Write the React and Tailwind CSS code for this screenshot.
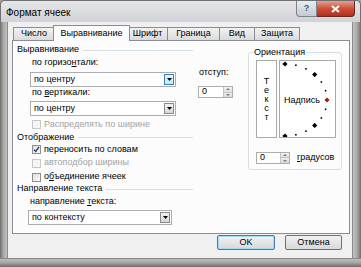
const F = "font-['Liberation_Sans',Arial,sans-serif]";

function DownArrow() {
  return (
    <svg width="5" height="3" viewBox="0 0 5 3">
      <path d="M0 0h5L2.5 3z" fill="#000" />
    </svg>
  );
}

function Dropdown({ value, wide, focused }) {
  return (
    <div className={`flex h-[15px] ${wide ? 'w-[146px]' : 'w-[144px]'} bg-white border border-[#abadb3]`}>
      <div className="flex-1 flex items-center pl-[3px] text-[9px] text-black">{value}</div>
      <div
        className={`w-[10px] m-[1px] flex items-center justify-center border ${
          focused
            ? 'bg-linear-to-b from-[#eaf6fd] to-[#bee6fd] border-[#3c7fb1]'
            : 'bg-linear-to-b from-[#f2f2f2] to-[#d6d6d6] border-[#8a8a8a]'
        }`}
      >
        <DownArrow />
      </div>
    </div>
  );
}

function Spinner({ width }) {
  return (
    <div className={`flex h-[12px] ${width} bg-white border border-[#abadb3]`}>
      <div className="flex-1 flex items-center pl-[3px] text-[9px] text-black">0</div>
      <div className="w-[9px] flex flex-col border-l border-[#c3c3c3]">
        <div className="flex-1 flex items-center justify-center bg-linear-to-b from-[#f4f4f4] to-[#dfdfdf] border-b border-[#c3c3c3]">
          <svg width="4" height="2" viewBox="0 0 4 2">
            <path d="M0 2h4L2 0z" fill="#7a7a7a" />
          </svg>
        </div>
        <div className="flex-1 flex items-center justify-center bg-linear-to-b from-[#eeeeee] to-[#d9d9d9]">
          <svg width="4" height="2" viewBox="0 0 4 2">
            <path d="M0 0h4L2 2z" fill="#7a7a7a" />
          </svg>
        </div>
      </div>
    </div>
  );
}

function Check({ children, checked, disabled, h }) {
  return (
    <div className={`flex items-center ${h} ml-[19px]`}>
      <div
        className={`w-[9px] h-[9px] border flex items-center justify-center ${
          disabled ? 'border-[#c9c9c9] bg-[#f5f5f5]' : 'border-[#8e8f8f] bg-linear-to-br from-[#dedede] to-[#fafafa]'
        }`}
      >
        {checked && (
          <svg width="7" height="7" viewBox="0 0 7 7">
            <path d="M1 3.6l1.7 1.8L6 1" stroke="#1f3f7a" strokeWidth="1.3" fill="none" />
          </svg>
        )}
      </div>
      <span className={`ml-[3px] text-[9px] ${disabled ? 'text-[#a3a3a3]' : 'text-black'}`}>{children}</span>
    </div>
  );
}

function Header({ children, h }) {
  return (
    <div className={`flex items-center ml-[4px] w-[176px] ${h}`}>
      <span className="text-[9px] text-black whitespace-nowrap">{children}</span>
      <div className="flex-1 h-px bg-[#d5dfe5] ml-[4px]" />
    </div>
  );
}

function Tab({ children, w, selected }) {
  if (selected) {
    return (
      <div className={`relative z-10 ${w} h-[16px] -mb-px -mx-[2px] bg-[#fcfcfc] border border-b-0 border-[#898c95] flex items-center justify-center text-[9px] text-black`}>
        {children}
      </div>
    );
  }
  return (
    <div className={`${w} h-[13px] -ml-px first:ml-0 bg-linear-to-b from-[#f3f3f3] to-[#dadada] border border-b-0 border-[#898c95] flex items-center justify-center text-[9px] text-black`}>
      {children}
    </div>
  );
}

function OrientationDial() {
  const cx = 5;
  const cy = 39;
  const rx = 42;
  const ry = 36;
  const angles = [90, 75, 60, 45, 30, 15, 0, -15, -30, -45, -60, -75, -90];
  return (
    <svg className="absolute inset-0" width="55" height="76" viewBox="0 0 55 76">
      {angles.map((a) => {
        const r = (a * Math.PI) / 180;
        const x = cx + rx * Math.cos(r);
        const y = cy - ry * Math.sin(r);
        const big = a % 45 === 0;
        if (big) {
          const s = 2.6;
          const fill = a === 0 ? '#9b1c22' : '#000';
          return (
            <path
              key={a}
              d={`M${x} ${y - s}L${x + s} ${y}L${x} ${y + s}L${x - s} ${y}z`}
              fill={fill}
            />
          );
        }
        return <rect key={a} x={x - 0.8} y={y - 0.8} width="1.6" height="1.6" fill="#000" />;
      })}
    </svg>
  );
}

export default function App() {
  return (
    <div className={`w-[361px] h-[267px] flex flex-col bg-[#9f9f9f] overflow-hidden ${F}`}>
      {/* Title bar */}
      <div className="h-[22px] flex items-start bg-linear-to-b from-[#e6e7e9] to-[#d0d2d5] border-t border-l border-r border-[#6f6f6f] rounded-t-[5px]">
        <span className="mt-[4px] ml-[5px] text-[10px] text-black">Формат ячеек</span>
        <div className="ml-auto mr-[5px] flex">
          <div className="w-[21px] h-[16px] rounded-bl-[4px] border border-t-0 border-[#7b8290] bg-linear-to-b from-[#e9edf2] to-[#c3cad3] flex items-center justify-center text-[9px] font-bold text-[#4a5a70]">
            ?
          </div>
          <div className="w-[38px] h-[16px] rounded-br-[4px] border border-t-0 border-l-0 border-[#6d2a22] bg-linear-to-b from-[#e5a092] via-[#c9503c] to-[#b42d18] flex items-center justify-center">
            <svg width="9" height="8" viewBox="0 0 9 8">
              <path d="M1 1l7 6M8 1L1 7" stroke="#fff" strokeWidth="2" />
            </svg>
          </div>
        </div>
      </div>

      <div className="flex flex-1">
        <div className="w-[8px] bg-linear-to-r from-[#6f6f6f] via-[#a9a9a9] to-[#c2c2c2] border-r border-[#8a8a8a]" />

        {/* Content area */}
        <div className="w-[344px] bg-[#f0f0f0] flex flex-col pt-[3px] pl-[4px]">
          {/* Tabs */}
          <div className="h-[15px] flex items-end pl-[1px]">
            <Tab w="w-[42px]">Число</Tab>
            <Tab w="w-[77px]" selected>
              Выравнивание
            </Tab>
            <Tab w="w-[41px]">Шрифт</Tab>
            <Tab w="w-[53px]">Граница</Tab>
            <Tab w="w-[36px]">Вид</Tab>
            <Tab w="w-[46px]">Защита</Tab>
          </div>

          {/* Panel */}
          <div className="w-[338px] h-[194px] border border-[#898c95] bg-[#fcfcfc] flex">
            {/* Left column */}
            <div className="w-[180px] flex flex-col pt-[3px]">
              <Header h="h-[12px]">Выравнивание</Header>
              <div className="h-[12px] mt-px ml-[19px] flex items-center text-[9px] text-black">
                <span>
                  по горизо<span className="underline">н</span>тали:
                </span>
              </div>
              <div className="mt-[3px] ml-[17px]">
                <Dropdown value="по центру" wide focused />
              </div>
              <div className="h-[12px] ml-[19px] flex items-center text-[9px] text-black">
                <span>
                  по <span className="underline">в</span>ертикали:
                </span>
              </div>
              <div className="mt-[2px] ml-[17px]">
                <Dropdown value="по центру" wide />
              </div>
              <Check h="h-[13px] mt-[2px]" disabled>
                Распределять по ширине
              </Check>
              <Header h="h-[11px] mt-px">Отображение</Header>
              <Check h="h-[13px]" checked>
                переносить по словам
              </Check>
              <Check h="h-[14px]" disabled>
                автоподбор ширины
              </Check>
              <Check h="h-[14px]">
                о<span className="underline">б</span>ъединение ячеек
              </Check>
              <Header h="h-[10px]">Направление текста</Header>
              <div className="h-[12px] mt-[2px] ml-[17px] flex items-center text-[9px] text-black">
                <span>
                  направление <span className="underline">т</span>екста:
                </span>
              </div>
              <div className="mt-[2px] ml-[15px]">
                <Dropdown value="по контексту" />
              </div>
            </div>

            {/* Middle: indent */}
            <div className="w-[55px] flex flex-col">
              <div className="h-[12px] mt-[26px] ml-[6px] flex items-center text-[9px] text-black">отступ:</div>
              <div className="mt-[7px] ml-[5px]">
                <Spinner width="w-[35px]" />
              </div>
            </div>

            {/* Orientation group */}
            <div className="pt-[11px]">
              <div className="relative w-[94px] h-[118px] border border-[#d5dfe5] rounded-[3px] flex flex-col pt-[7px] pl-[7px]">
                <span className="absolute -top-[7px] left-[4px] px-[1px] bg-[#fcfcfc] text-[9px] text-black leading-[12px]">
                  Ориентация
                </span>
                <div className="flex gap-[2px]">
                  <div className="w-[21px] h-[78px] border border-[#a9a9a9] bg-white flex flex-col items-center justify-center text-[9px] leading-[9px] text-black">
                    <span>Т</span>
                    <span>е</span>
                    <span>к</span>
                    <span>с</span>
                    <span>т</span>
                  </div>
                  <div className="relative w-[57px] h-[78px] border border-[#a9a9a9] bg-white flex items-center pl-[4px] pt-[3px]">
                    <OrientationDial />
                    <span className="relative text-[9px] text-black bg-white">Надпись</span>
                  </div>
                </div>
                <div className="flex items-center mt-[13px]">
                  <Spinner width="w-[34px]" />
                  <span className="ml-[7px] text-[9px] text-black">
                    <span className="underline">г</span>радусов
                  </span>
                </div>
              </div>
            </div>
          </div>

          {/* Buttons */}
          <div className="flex mt-px ml-[205px] gap-[10px]">
            <div className="w-[58px] h-[15px] rounded-[2px] border border-[#3c7fb1] bg-linear-to-b from-[#f2f2f2] to-[#d8d8d8] flex items-center justify-center text-[9px] text-black shadow-[inset_0_0_0_1px_#a6d9f4]">
              OK
            </div>
            <div className="w-[57px] h-[15px] rounded-[2px] border border-[#707070] bg-linear-to-b from-[#f2f2f2] to-[#d8d8d8] flex items-center justify-center text-[9px] text-black">
              Отмена
            </div>
          </div>
        </div>

        <div className="w-[9px] bg-linear-to-r from-[#c2c2c2] via-[#a9a9a9] to-[#6f6f6f] border-l border-[#8a8a8a]" />
      </div>

      <div className="h-[9px] bg-linear-to-b from-[#bdbdbd] via-[#a3a3a3] to-[#6a6a6a] border-t border-[#8a8a8a]" />
    </div>
  );
}
